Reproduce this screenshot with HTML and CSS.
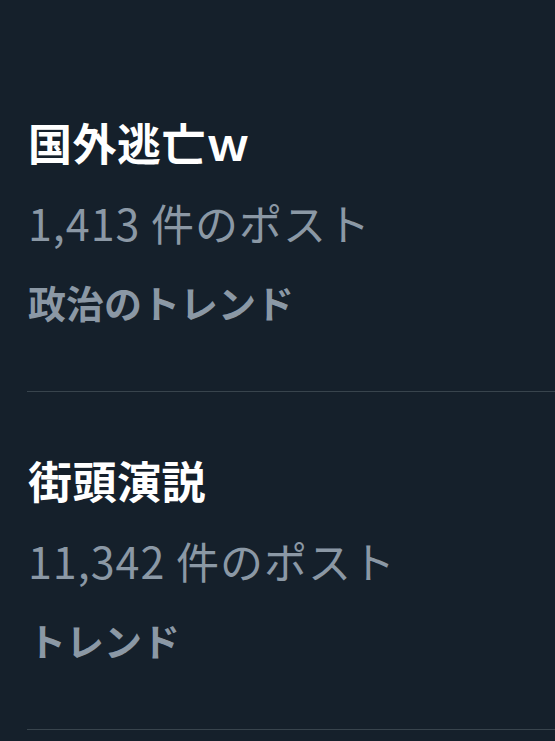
FILE: index.html
```html
<!DOCTYPE html>
<html lang="ja">

<head>
  <meta charset="UTF-8">
  <meta name="viewport" content="width=device-width, initial-scale=1.0">
  <title>トレンド</title>
  <link rel="stylesheet" href="styles.css">
</head>

<body>
  <div class="trends">
    <div class="trend">
      <div class="trend-name">国外逃亡ｗ</div>
      <div class="trend-count">1,413 件のポスト</div>
      <div class="trend-context">政治のトレンド</div>
    </div>

    <div class="trend">
      <div class="trend-name">街頭演説</div>
      <div class="trend-count">11,342 件のポスト</div>
      <div class="trend-context">トレンド</div>
    </div>
  </div>
</body>

</html>
```

FILE: styles.css
```css
body {
  margin: 0;
  background-color: #15202b;
  font-family: "Noto Sans CJK JP", "Noto Sans", sans-serif;
  overflow: hidden;
}

.trends {
  padding-top: 54px;
}

.trend {
  margin-left: 27px;
  padding: 48px 0 49px 1px;
  border-bottom: 1px solid #38444d;
}

.trend-name,
.trend-count,
.trend-context {
  height: 80px;
  line-height: 80px;
  white-space: nowrap;
}

.trend-name {
  color: #ffffff;
  font-size: 44px;
  font-weight: 700;
  letter-spacing: 0.5px;
}

.trend-count {
  color: #8b98a5;
  font-size: 43px;
  letter-spacing: 1px;
}

.trend-context {
  color: #8b98a5;
  font-size: 38px;
  font-weight: 700;
}
```
